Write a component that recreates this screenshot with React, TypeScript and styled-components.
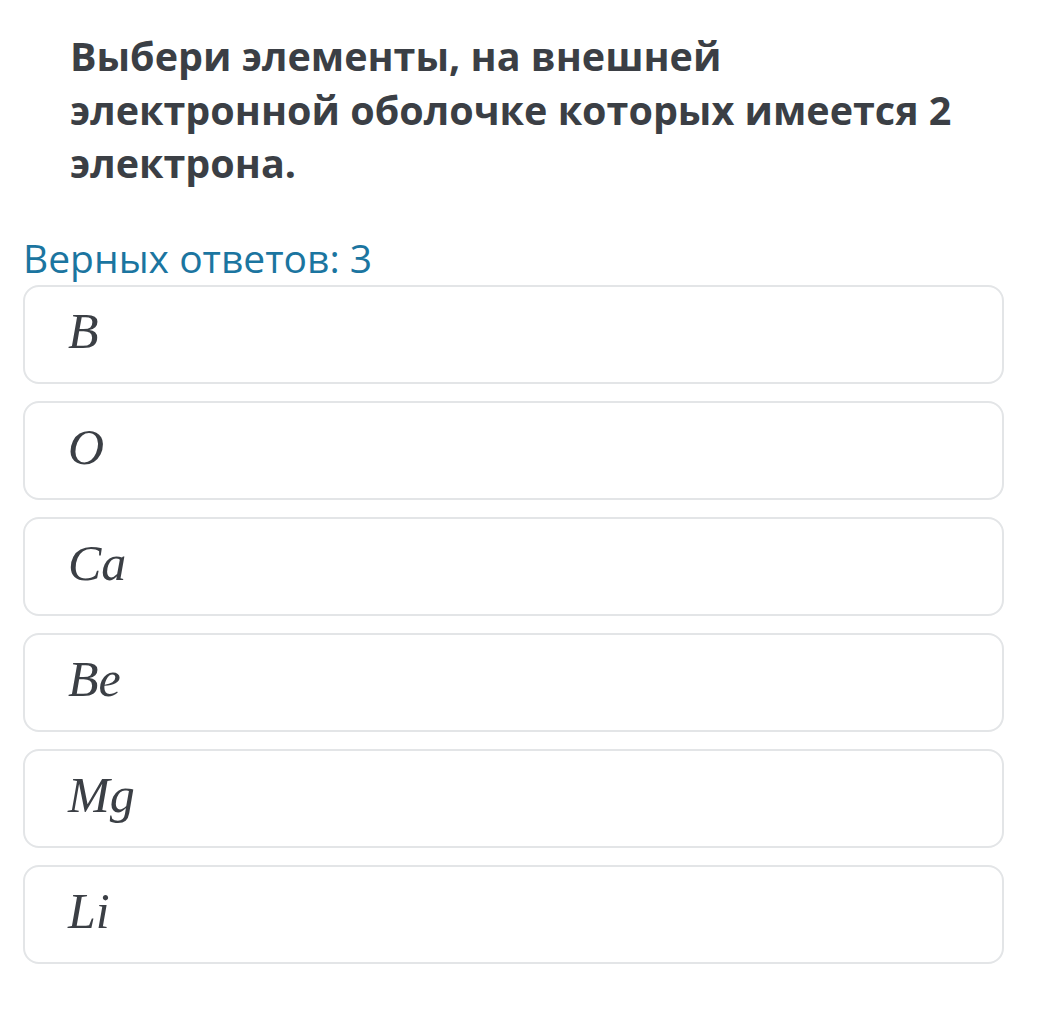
import React from "react";
import styled, { createGlobalStyle } from "styled-components";

const GlobalStyle = createGlobalStyle`
  body {
    margin: 0;
    background: #ffffff;
    font-family: "Open Sans", "Noto Sans", sans-serif;
  }
`;

const Page = styled.div`
  width: 1039px;
  padding: 30px 35px 0 23px;
  box-sizing: border-box;
`;

const Question = styled.h1`
  margin: 0 0 0 47px;
  max-width: 900px;
  font-size: 39.5px;
  line-height: 53.5px;
  font-weight: 700;
  color: #3b3f45;
`;

const Hint = styled.div`
  margin-top: 44px;
  font-size: 39px;
  line-height: 46px;
  color: #1b75a0;
`;

const Options = styled.div`
  display: flex;
  flex-direction: column;
  gap: 17px;
  margin-top: 4px;
`;

const Option = styled.div`
  height: 99px;
  box-sizing: border-box;
  border: 2px solid #e3e5e7;
  border-radius: 16px;
  display: flex;
  align-items: center;
  padding: 0 0 0 43px;
`;

const Formula = styled.span`
  font-family: "Liberation Serif", "DejaVu Serif", serif;
  font-style: italic;
  font-size: 50px;
  color: #3b3f45;
  margin-top: -6px;
`;

const elements = ["B", "O", "Ca", "Be", "Mg", "Li"];

const App: React.FC = () => (
  <>
    <GlobalStyle />
    <Page>
      <Question>
        Выбери элементы, на внешней электронной оболочке которых имеется 2
        электрона.
      </Question>
      <Hint>Верных ответов: 3</Hint>
      <Options>
        {elements.map((el) => (
          <Option key={el}>
            <Formula>{el}</Formula>
          </Option>
        ))}
      </Options>
    </Page>
  </>
);

export default App;
